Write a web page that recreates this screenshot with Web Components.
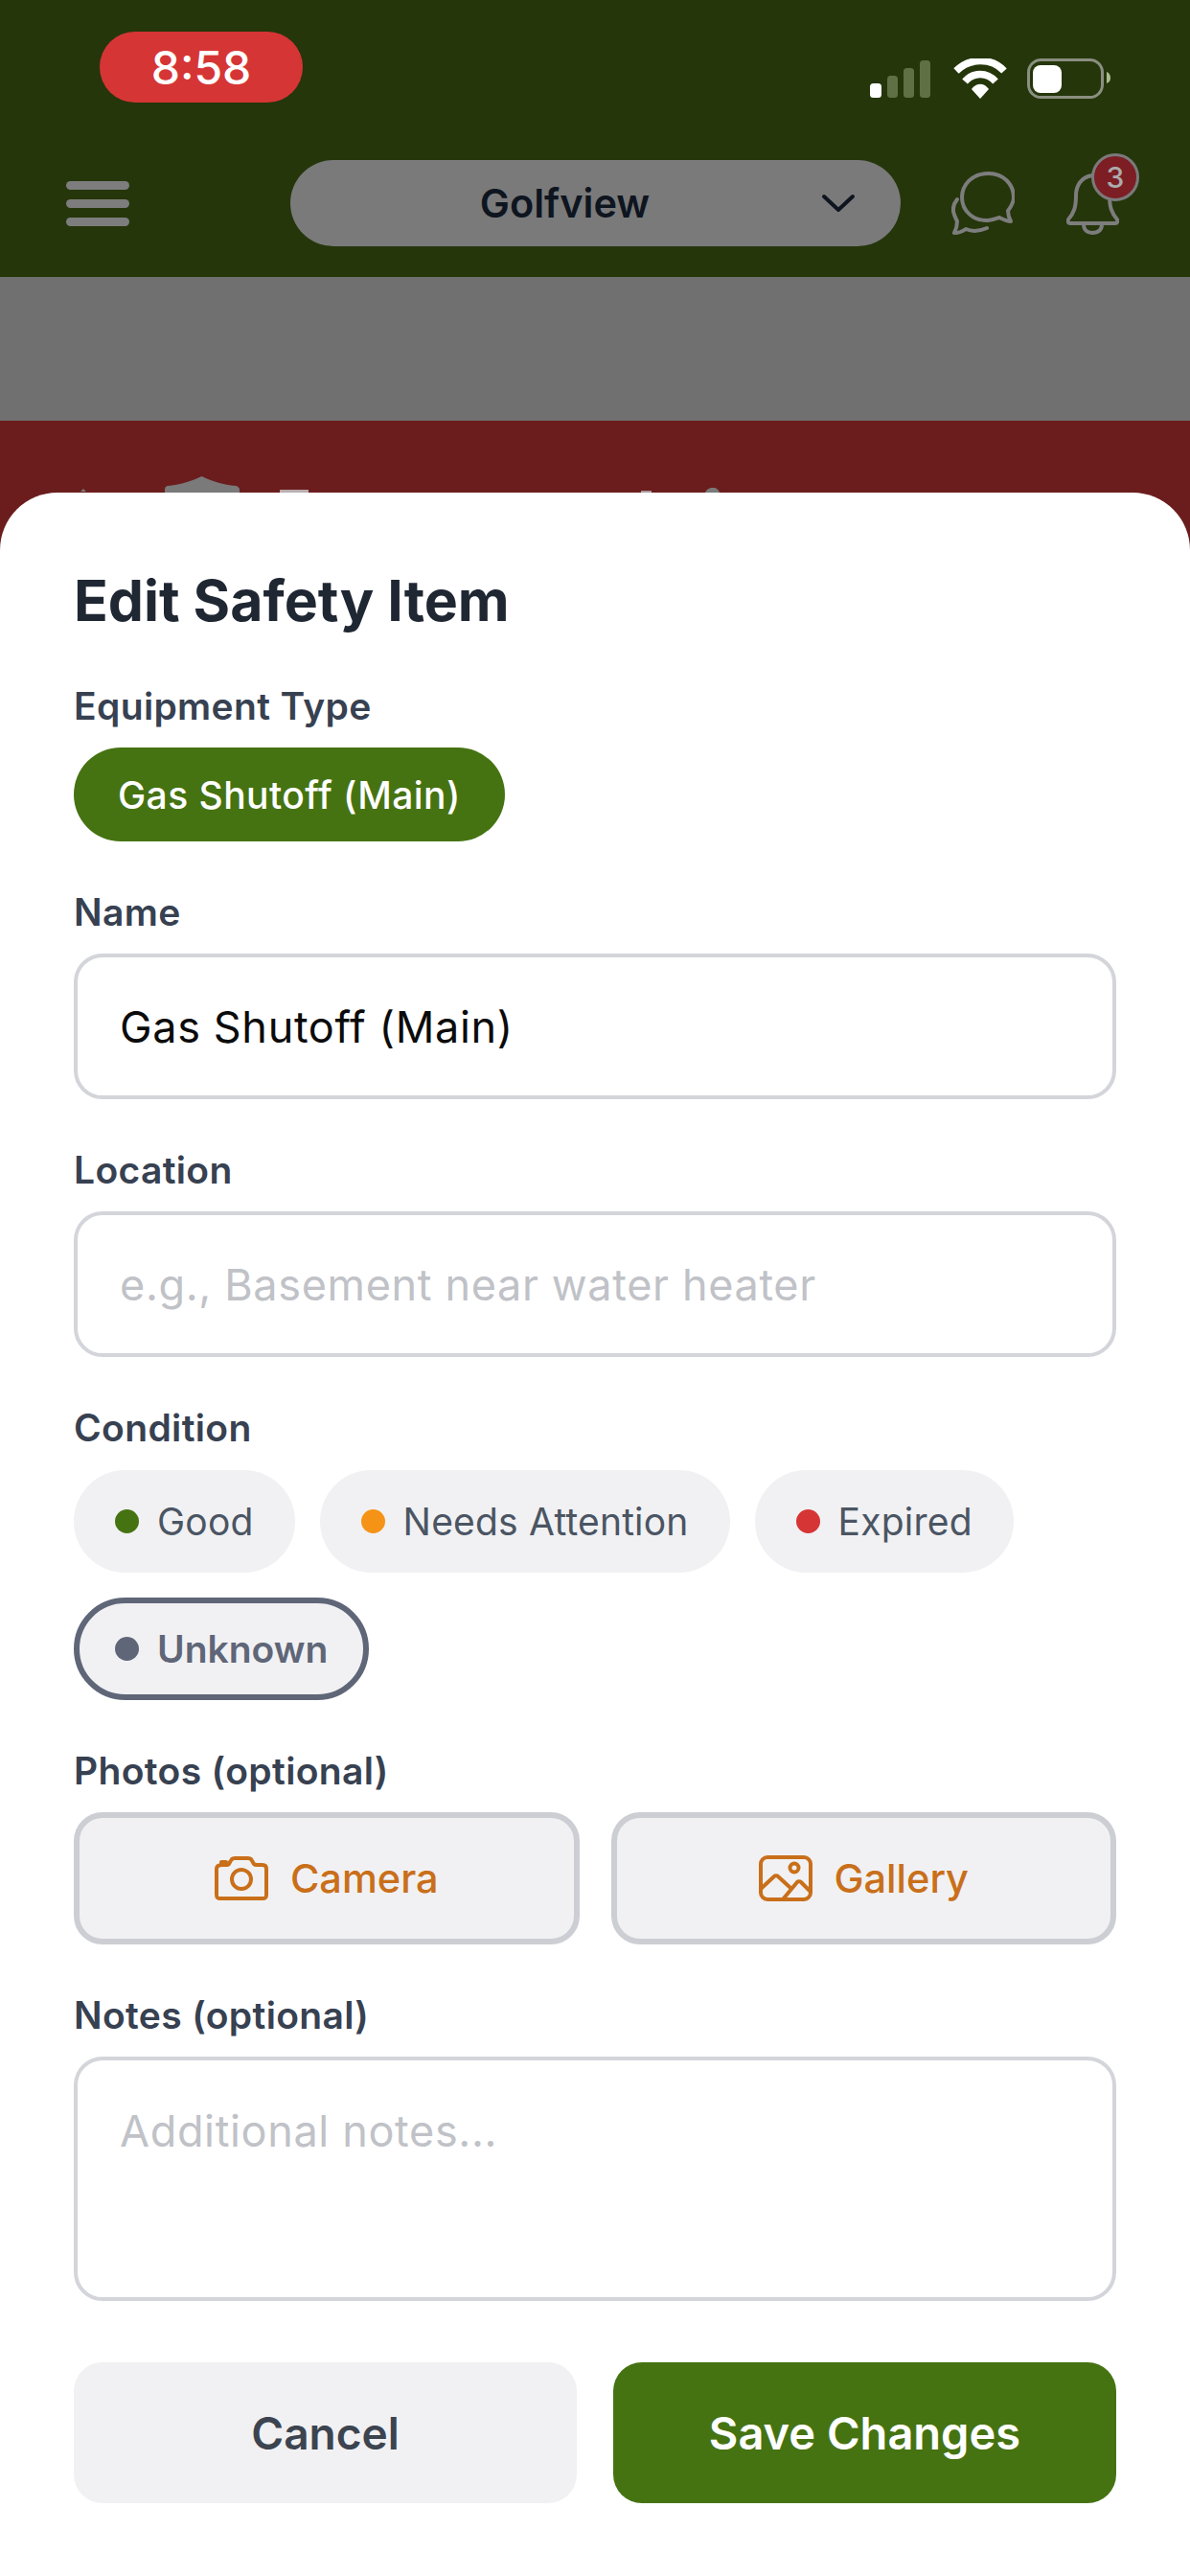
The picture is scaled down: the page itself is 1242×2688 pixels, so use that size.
<!DOCTYPE html>
<html>
<head>
<meta charset="utf-8">
<style>
  html, body { margin: 0; padding: 0; background: #fff; }
  body { font-family: Inter, "Liberation Sans", sans-serif; }
</style>
</head>
<body>
<app-screen>
  <status-bar time="8:58"></status-bar>
  <app-header property="Golfview" badge="3"></app-header>
  <page-banner></page-banner>
  <bottom-sheet heading="Edit Safety Item">
    <form-field label="Equipment Type">
      <type-pill>Gas Shutoff (Main)</type-pill>
    </form-field>
    <form-field label="Name">
      <text-box>Gas Shutoff (Main)</text-box>
    </form-field>
    <form-field label="Location">
      <text-box placeholder>e.g., Basement near water heater</text-box>
    </form-field>
    <form-field label="Condition">
      <chip-row>
        <condition-chip color="#467312">Good</condition-chip>
        <condition-chip color="#f59316">Needs Attention</condition-chip>
        <condition-chip color="#d63535">Expired</condition-chip>
        <condition-chip color="#5f6678" selected>Unknown</condition-chip>
      </chip-row>
    </form-field>
    <form-field label="Photos (optional)">
      <button-pair>
        <photo-button icon="camera">Camera</photo-button>
        <photo-button icon="gallery">Gallery</photo-button>
      </button-pair>
    </form-field>
    <form-field label="Notes (optional)">
      <text-box placeholder multiline>Additional notes...</text-box>
    </form-field>
    <sheet-actions>
      <action-button>Cancel</action-button>
      <action-button primary>Save Changes</action-button>
    </sheet-actions>
  </bottom-sheet>
</app-screen>

<script>
class AppScreen extends HTMLElement {
  constructor() {
    super();
    this.attachShadow({ mode: "open" }).innerHTML = `
      <style>
        :host { display: block; position: relative; width: 1242px; height: 2688px; overflow: hidden; background: #6b1d1d; }
      </style>
      <slot></slot>`;
  }
}

class StatusBar extends HTMLElement {
  constructor() {
    super();
    const time = this.getAttribute("time");
    this.attachShadow({ mode: "open" }).innerHTML = `
      <style>
        :host { display: flex; height: 140px; background: #25360b; box-sizing: border-box; padding: 33px 83px 0 104px; justify-content: space-between; }
        .time { width: 212px; height: 74px; border-radius: 37px; background: #d63535; color: #fff; font-size: 48px; font-weight: 500; display: flex; align-items: center; justify-content: center; }
        svg { margin-top: 28px; display: block; }
      </style>
      <div class="time">${time}</div>
      <svg width="252" height="44" viewBox="0 0 252 44">
        <rect x="1" y="26" width="12" height="15" rx="3.5" fill="#fff"/>
        <rect x="19" y="18" width="11" height="23" rx="3.5" fill="#5f7045"/>
        <rect x="36" y="10" width="11" height="31" rx="3.5" fill="#5f7045"/>
        <rect x="53" y="2" width="11" height="39" rx="3.5" fill="#5f7045"/>
        <path d="M91 13 C105 -1 128 -1 141 13" fill="none" stroke="#fff" stroke-width="7.5" stroke-linecap="butt"/>
        <path d="M100 24 C109 14 123 14 132 24" fill="none" stroke="#fff" stroke-width="7.5"/>
        <path d="M107 32 C112 25 120 25 125 32 L116 42 Z" fill="#fff"/>
        <rect x="166.5" y="1.5" width="77" height="39" rx="13" fill="none" stroke="#8a8f80" stroke-width="3"/>
        <rect x="171" y="7" width="30" height="29" rx="8" fill="#fff"/>
        <path d="M248 14 C251 15 252 18 252 20 C252 23 251 25 248 26 Z" fill="#a9bd8c"/>
      </svg>`;
  }
}

class AppHeader extends HTMLElement {
  constructor() {
    super();
    const name = this.getAttribute("property");
    const badge = this.getAttribute("badge");
    this.attachShadow({ mode: "open" }).innerHTML = `
      <style>
        :host { display: flex; align-items: flex-start; height: 149px; background: #25360b; box-sizing: border-box; padding: 27px 0 0 69px; }
        .burger { width: 66px; margin-top: 22px; display: flex; flex-direction: column; gap: 10px; }
        .burger i { display: block; height: 9px; border-radius: 5px; background: #7d7d7d; }
        .select { margin-left: 168px; width: 637px; height: 90px; border-radius: 45px; background: #7a7a7a; position: relative; display: flex; align-items: center; justify-content: center; color: #0e1520; font-size: 41.5px; font-weight: 600; padding-right: 64px; box-sizing: border-box; }
        .select svg { position: absolute; left: 554px; top: 35px; }
        .chat { margin-left: 53px; margin-top: 12px; display: block; }
        .bell-wrap { position: relative; margin-left: 54px; margin-top: 13px; width: 55px; height: 65px; }
        .bell-wrap svg { display: block; }
        .badge { position: absolute; left: 26px; top: -20px; width: 50px; height: 50px; box-sizing: border-box; border: 3px solid #7a7a7a; border-radius: 50%; background: #7d1d24; color: #ababab; font-size: 30px; font-weight: 500; display: flex; align-items: center; justify-content: center; }
      </style>
      <div class="burger"><i></i><i></i><i></i></div>
      <div class="select"><span>${name}</span>
        <svg width="36" height="20" viewBox="0 0 36 20"><path d="M3 3 L18 17 L33 3" fill="none" stroke="#0e1520" stroke-width="4" stroke-linecap="round" stroke-linejoin="round"/></svg>
      </div>
      <svg class="chat" width="66" height="66" viewBox="0 0 66 66" fill="none" stroke="#7d7d7d" stroke-width="4" stroke-linecap="round" stroke-linejoin="round">
        <path d="M39 2 C21 2 11 14 11 27 C11 41 23 52 38 51 C43 51 47 49 50 48 C54 50 58 52 62 52 C60 48 59 45 59 41 C62 37 65 33 65 27 C65 13 54 2 39 2 Z"/>
        <path d="M6 29 C2 34 1 40 3 45 C4 48 5 50 6 52 C6 57 5 60 3 64 C7 64 11 63 15 60 C22 63 30 62 37 59"/>
      </svg>
      <div class="bell-wrap">
        <svg width="55" height="65" viewBox="0 0 55 65" fill="none" stroke="#7d7d7d" stroke-width="4" stroke-linecap="round" stroke-linejoin="round">
          <path d="M27 3 C15 5 10 14 10 24 C10 36 8 42 2 49 C1 51 2 53 4 53 L51 53 C53 53 54 51 53 49 C47 42 45 36 45 24"/>
          <path d="M18 54 C18 60 22 63 27 63 C33 63 37 60 37 54"/>
        </svg>
        <div class="badge">${badge}</div>
      </div>`;
  }
}

class PageBanner extends HTMLElement {
  constructor() {
    super();
    // only the top edge of the banner content shows above the sheet
    this.attachShadow({ mode: "open" }).innerHTML = `
      <style>
        :host { display: block; }
        .strip { height: 150px; background: #707070; }
        .red { height: 120px; background: #6b1d1d; padding: 58px 0 0 80px; box-sizing: border-box; }
        svg { display: block; }
      </style>
      <div class="strip"></div>
      <div class="red">
        <svg width="680" height="20" viewBox="0 0 680 20" fill="#7a7a7a">
          <path d="M4 16 L7 13 L10 16 Z"/>
          <path d="M130.500 0 C140 5 154 9 166 10 C168 10 170 12 170 14 L170 20 L92 20 L92 14 C92 12 93 10 95 10 C107 9 121 5 130.500 0 Z"/>
          <rect x="212" y="14" width="30" height="3" fill="#b9aeae"/>
          <rect x="589" y="15" width="11" height="2" fill="#a89c9c"/>
          <path d="M656 17 C657 14 660 12 664 12 C668 12 670 14 671 17 Z"/>
        </svg>
      </div>`;
  }
}

class BottomSheet extends HTMLElement {
  constructor() {
    super();
    const heading = this.getAttribute("heading");
    this.attachShadow({ mode: "open" }).innerHTML = `
      <style>
        :host { display: block; position: absolute; left: 0; right: 0; top: 514px; bottom: 0; background: #fff; border-radius: 60px 60px 0 0; box-sizing: border-box; padding: 80px 77px 0; }
        h2 { margin: 0 0 53px; height: 66px; line-height: 66px; font-size: 59px; font-weight: 700; color: #1f2733; }
      </style>
      <h2>${heading}</h2>
      <slot></slot>`;
  }
}

class FormField extends HTMLElement {
  constructor() {
    super();
    const label = this.getAttribute("label");
    this.attachShadow({ mode: "open" }).innerHTML = `
      <style>
        :host { display: block; margin-bottom: 50px; }
        .label { height: 48px; line-height: 48px; margin-bottom: 19px; font-size: 39px; font-weight: 600; letter-spacing: 0.35px; color: #374151; }
      </style>
      <div class="label">${label}</div>
      <slot></slot>`;
  }
}

class TypePill extends HTMLElement {
  constructor() {
    super();
    this.attachShadow({ mode: "open" }).innerHTML = `
      <style>
        :host { display: inline-flex; height: 98px; align-items: center; padding: 0 46px; border-radius: 49px; background: #467312; color: #fff; font-size: 39px; font-weight: 500; letter-spacing: 0.45px; vertical-align: top; }
      </style>
      <slot></slot>`;
  }
}

class TextBox extends HTMLElement {
  constructor() {
    super();
    this.attachShadow({ mode: "open" }).innerHTML = `
      <style>
        :host { display: flex; align-items: center; height: 152px; box-sizing: border-box; border: 4px solid #d3d5da; border-radius: 30px; padding: 0 44px; font-size: 45px; letter-spacing: 0.65px; color: #0b0b0b; background: #fff; }
        :host([placeholder]) { color: #c0c2c7; }
        :host([multiline]) { height: 255px; align-items: flex-start; padding-top: 47px; line-height: 54px; }
      </style>
      <slot></slot>`;
  }
}

class ChipRow extends HTMLElement {
  constructor() {
    super();
    this.attachShadow({ mode: "open" }).innerHTML = `
      <style>
        :host { display: flex; flex-wrap: wrap; gap: 26px; margin-top: 20px; }
      </style>
      <slot></slot>`;
  }
}

class ConditionChip extends HTMLElement {
  constructor() {
    super();
    const color = this.getAttribute("color");
    this.attachShadow({ mode: "open" }).innerHTML = `
      <style>
        :host { display: inline-flex; align-items: center; gap: 19px; height: 107px; box-sizing: border-box; padding: 0 43px; border-radius: 54px; background: #f1f1f3; color: #4b5563; font-size: 39px; letter-spacing: 0.2px; }
        :host([selected]) { border: 6px solid #5f6678; padding: 0 37px; color: #5f6678; font-weight: 600; letter-spacing: 0; }
        .dot { width: 25px; height: 25px; border-radius: 50%; background: ${color}; }
      </style>
      <span class="dot"></span><slot></slot>`;
  }
}

class ButtonPair extends HTMLElement {
  constructor() {
    super();
    this.attachShadow({ mode: "open" }).innerHTML = `
      <style>
        :host { display: grid; grid-template-columns: 1fr 1fr; gap: 33px; }
      </style>
      <slot></slot>`;
  }
}

const PHOTO_ICONS = {
  camera: `<svg width="56" height="46" viewBox="0 0 56 46" fill="none" stroke="#c96f1a" stroke-width="4" stroke-linecap="round" stroke-linejoin="round">
      <path d="M8 9 L13 9 C15 9 15 8 16 6 L18 3 C19 2 20 2 21 2 L35 2 C36 2 37 2 38 3 L41 8 C42 9 42 9 44 9 L50 9 C53 9 54 11 54 13 L54 40 C54 43 53 44 50 44 L6 44 C3 44 2 43 2 40 L2 13 C2 10 4 9 8 9 Z"/>
      <path d="M7 9 L7 6 L12 6"/>
      <circle cx="28" cy="24" r="10"/>
    </svg>`,
  gallery: `<svg width="56" height="48" viewBox="0 0 56 48" fill="none" stroke="#c96f1a" stroke-width="4" stroke-linecap="round" stroke-linejoin="round">
      <rect x="2" y="2" width="52" height="44" rx="7"/>
      <circle cx="37" cy="13" r="4.500"/>
      <path d="M2 35 L16 22 C17 21 19 21 20 22 L32 33"/>
      <path d="M25 46 L40 28 C41 27 43 27 44 28 L54 38"/>
    </svg>`
};

class PhotoButton extends HTMLElement {
  constructor() {
    super();
    const icon = PHOTO_ICONS[this.getAttribute("icon")];
    this.attachShadow({ mode: "open" }).innerHTML = `
      <style>
        :host { display: flex; align-items: center; justify-content: center; gap: 23px; height: 138px; box-sizing: border-box; border: 6px solid #ccced4; border-radius: 30px; background: #f1f1f3; color: #c96f1a; font-size: 41.5px; font-weight: 500; }
        svg { display: block; }
      </style>
      ${icon}<slot></slot>`;
  }
}

class SheetActions extends HTMLElement {
  constructor() {
    super();
    this.attachShadow({ mode: "open" }).innerHTML = `
      <style>
        :host { display: grid; grid-template-columns: 1fr 1fr; gap: 38px; margin-top: 64px; }
      </style>
      <slot></slot>`;
  }
}

class ActionButton extends HTMLElement {
  constructor() {
    super();
    this.attachShadow({ mode: "open" }).innerHTML = `
      <style>
        :host { display: flex; align-items: center; justify-content: center; height: 147px; border-radius: 30px; background: #f1f1f3; color: #3c4450; font-size: 46px; font-weight: 600; }
        :host([primary]) { background: #467312; color: #fff; font-size: 47px; }
      </style>
      <slot></slot>`;
  }
}

customElements.define("app-screen", AppScreen);
customElements.define("status-bar", StatusBar);
customElements.define("app-header", AppHeader);
customElements.define("page-banner", PageBanner);
customElements.define("bottom-sheet", BottomSheet);
customElements.define("form-field", FormField);
customElements.define("type-pill", TypePill);
customElements.define("text-box", TextBox);
customElements.define("chip-row", ChipRow);
customElements.define("condition-chip", ConditionChip);
customElements.define("button-pair", ButtonPair);
customElements.define("photo-button", PhotoButton);
customElements.define("sheet-actions", SheetActions);
customElements.define("action-button", ActionButton);
</script>
</body>
</html>
